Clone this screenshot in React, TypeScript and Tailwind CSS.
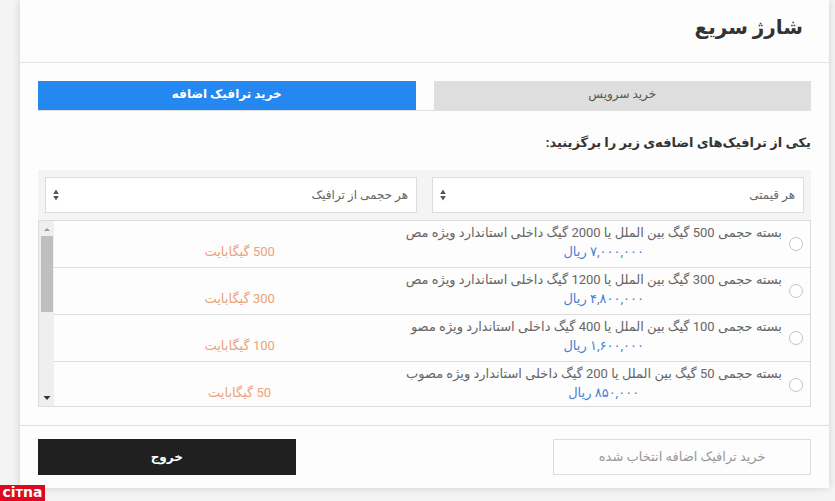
import { useState } from 'react';

const packages = [
    { id: 1, title: "بسته حجمی 500 گیگ بین الملل یا 2000 گیگ داخلی استاندارد ویژه مص", price: "۷,۰۰۰,۰۰۰ ریال", volume: "500 گیگابایت" },
    { id: 2, title: "بسته حجمی 300 گیگ بین الملل یا 1200 گیگ داخلی استاندارد ویژه مص", price: "۴,۸۰۰,۰۰۰ ریال", volume: "300 گیگابایت" },
    { id: 3, title: "بسته حجمی 100 گیگ بین الملل یا 400 گیگ داخلی استاندارد ویژه مصو", price: "۱,۶۰۰,۰۰۰ ریال", volume: "100 گیگابایت" },
    { id: 4, title: "بسته حجمی 50 گیگ بین الملل یا 200 گیگ داخلی استاندارد ویژه مصوب", price: "۸۵۰,۰۰۰ ریال", volume: "50 گیگابایت" },
];

function FilterSelect({ id, label }: { id: string; label: string }) {
    return (
        <div className="relative flex-1">
            <select
                id={id}
                aria-label={label}
                className="block w-full h-9 appearance-none rounded-none border border-[#dcdcdc] bg-white pr-2 pl-8 text-xs text-[#666]"
            >
                <option>{label}</option>
            </select>
            <svg className="pointer-events-none absolute left-2 top-3 w-1.5 h-3" viewBox="0 0 6 12" fill="#555">
                <path d="M3 0.5 L5.8 5 H0.2 Z M3 11.5 L5.8 7 H0.2 Z" />
            </svg>
        </div>
    );
}

export default function QuickCharge() {
    const [tab, setTab] = useState('traffic'); // 'service' or 'traffic'
    const [selected, setSelected] = useState<number | null>(null);

    const tabClass = (name: string) =>
        tab === name ? 'bg-[#2488f0] text-white font-bold' : 'bg-[#dedede] text-[#555]';

    return (
        <div dir="rtl" className="relative min-h-screen bg-[#f4f4f4] pl-5 pr-1.5 pb-3 font-[Roboto,'DejaVu_Sans',sans-serif]">
            <main className="bg-[#fdfdfd] shadow-[0_0_8px_rgba(0,0,0,0.15)]">
                <header className="flex h-[63px] items-center border-b border-[#e6e6e6] px-[26px] pb-2">
                    <h1 className="text-xl leading-8 font-bold text-[#333]">شارژ سریع</h1>
                </header>

                <div className="px-[18px] pt-[18px] pb-[18px]">
                    {/* タブ */}
                    <div className="flex gap-[18px] border-b border-[#e0e0e0]">
                        <button onClick={() => setTab('service')} className={`h-[29px] flex-1 pb-1 text-xs ${tabClass('service')}`}>
                            خرید سرویس
                        </button>
                        <button onClick={() => setTab('traffic')} className={`h-[29px] flex-1 pb-1 text-xs ${tabClass('traffic')}`}>
                            خرید ترافیک اضافه
                        </button>
                    </div>

                    <h2 className="pt-5 pb-[15px] text-[13px] leading-6 font-bold text-[#333]">
                        یکی از ترافیک‌های اضافه‌ی زیر را برگزینید:
                    </h2>

                    {/* フィルター */}
                    <div className="flex gap-[15px] bg-[#f4f4f4] px-[7px] py-[7px]">
                        <FilterSelect id="price" label="هر قیمتی" />
                        <FilterSelect id="volume" label="هر حجمی از ترافیک" />
                    </div>

                    {/* パッケージ一覧 */}
                    <div className="flex h-[187px] border border-[#dcdcdc]">
                        <ul className="flex-1 overflow-hidden">
                            {packages.map(item => (
                                <li key={item.id} className="flex h-[47px] items-center border-b border-[#dcdcdc] pr-[7px]">
                                    <input
                                        type="radio"
                                        name="package"
                                        id={`package-${item.id}`}
                                        checked={selected === item.id}
                                        onChange={() => setSelected(item.id)}
                                        className="size-3.5 shrink-0 appearance-none rounded-full border border-[#c4c4c4] bg-white checked:border-4 checked:border-[#2488f0]"
                                    />
                                    <label htmlFor={`package-${item.id}`} className="mr-[7px] flex flex-1 items-end pb-1 whitespace-nowrap text-[13px] leading-[19px]">
                                        <span className="w-[49%]">
                                            <span className="block text-[#666]">{item.title}</span>
                                            <span className="block text-center text-[#4a80d0]">{item.price}</span>
                                        </span>
                                        <span className="flex-1 text-center text-[#eca27c]">{item.volume}</span>
                                    </label>
                                </li>
                            ))}
                        </ul>
                        <div className="flex w-[15px] flex-col items-center bg-[#efefef]">
                            <svg className="h-[15px] w-2" viewBox="0 0 8 15" fill="#999"><path d="M1 10 L4 7 L7 10 Z" /></svg>
                            <div className="h-[76px] w-3 bg-[#bfbfbf]" />
                            <svg className="mt-auto h-4 w-2" viewBox="0 0 8 16" fill="#333"><path d="M0.5 6 L4 10 L7.5 6 Z" /></svg>
                        </div>
                    </div>
                </div>

                <footer className="flex justify-between border-t border-[#dedede] px-[18px] py-[13px]">
                    <button className="h-9 w-1/3 border border-[#dcdcdc] bg-[#fdfdfd] text-[13px] text-[#999]">
                        خرید ترافیک اضافه انتخاب شده
                    </button>
                    <button className="h-9 w-1/3 bg-[#202020] text-xs font-bold text-white">خروج</button>
                </footer>
            </main>

            <div dir="ltr" className="absolute bottom-0 left-0 w-[45px] bg-[#dc0a1e] text-center font-['DejaVu_Sans',sans-serif] text-sm leading-[15px] font-bold text-white">
                ci<span className="text-[11px]">T</span>na
            </div>
        </div>
    );
}
